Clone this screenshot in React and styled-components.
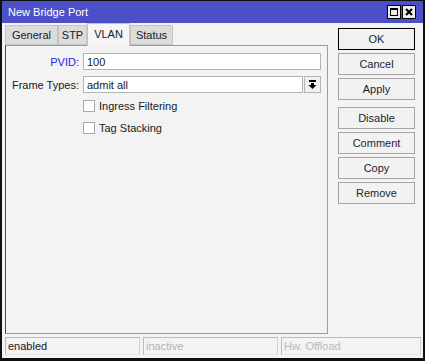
import React from 'react';
import styled, { createGlobalStyle } from 'styled-components';

const Global = createGlobalStyle`
  html, body { margin: 0; padding: 0; background: #fff; }
  body { font-family: "Liberation Sans", Arial, sans-serif; font-size: 11px; color: #202020; }
`;

const Window = styled.div`
  box-sizing: border-box;
  width: 425px;
  height: 361px;
  background: #f3f3f3;
  border-style: solid;
  border-color: #101010;
  border-width: 1px 2px 3px 2px;
  display: flex;
  flex-direction: column;
`;

const TitleBar = styled.div`
  height: 22px;
  background: #4c50c8;
  color: #fff;
  display: flex;
  align-items: center;
  padding: 0 7px 0 6px;
`;

const Title = styled.div`
  flex: 1;
  font-size: 11px;
`;

const TitleButton = styled.div`
  box-sizing: border-box;
  width: 14px;
  height: 14px;
  margin-left: 1px;
  background: #ececec;
  border: 1px solid #000;
  display: flex;
  align-items: center;
  justify-content: center;
`;

const Body = styled.div`
  display: flex;
  padding-left: 3px;
`;

const LeftCol = styled.div`
  display: flex;
  flex-direction: column;
`;

const Tabs = styled.div`
  display: flex;
  align-items: flex-end;
  height: 22px;
`;

const Tab = styled.div`
  box-sizing: border-box;
  width: ${p => p.$w}px;
  height: ${p => (p.$active ? 23 : 20)}px;
  margin-bottom: ${p => (p.$active ? -1 : 0)}px;
  background: ${p => (p.$active ? '#f6f6f6' : '#dcdcdc')};
  border: 1px solid #c4c4c4;
  border-bottom: ${p => (p.$active ? 'none' : '1px solid #c4c4c4')};
  display: flex;
  align-items: center;
  justify-content: center;
  padding-bottom: ${p => (p.$active ? 3 : 0)}px;
  position: relative;
  z-index: ${p => (p.$active ? 1 : 0)};
`;

const Panel = styled.div`
  box-sizing: border-box;
  width: 323px;
  height: 289px;
  border: 1px solid #9c9c9c;
  border-left-color: #4a4a4a;
  padding: 7px 6px 0 0;
  display: grid;
  grid-template-columns: 73px 1fr;
  column-gap: 4px;
  row-gap: 6px;
  align-content: start;
`;

const Label = styled.div`
  text-align: right;
  align-self: center;
  color: ${p => (p.$blue ? '#2222ee' : '#202020')};
`;

const Field = styled.div`
  display: flex;
  gap: 1px;
  height: 17px;
`;

const Input = styled.div`
  box-sizing: border-box;
  flex: 1;
  height: 17px;
  background: #fff;
  border: 1px solid #b4b4b4;
  padding-left: 3px;
  display: flex;
  align-items: center;
`;

const DropButton = styled.div`
  box-sizing: border-box;
  width: 17px;
  height: 17px;
  background: #f0f0f0;
  border: 1px solid #b4b4b4;
  display: flex;
  align-items: center;
  justify-content: center;
`;

const CheckRow = styled.div`
  grid-column: 2;
  display: flex;
  align-items: center;
  gap: 4px;
  height: 16px;
  margin-top: ${p => p.$top || 0}px;
`;

const Box = styled.div`
  box-sizing: border-box;
  width: 12px;
  height: 12px;
  background: #fff;
  border: 1px solid #a8a8a8;
`;

const RightCol = styled.div`
  display: flex;
  flex-direction: column;
  padding-top: 5px;
  margin-left: 10px;
`;

const Button = styled.div`
  box-sizing: border-box;
  width: 77px;
  height: 22px;
  margin-bottom: ${p => p.$gap || 3}px;
  background: #f2f2f2;
  border: 1px solid ${p => (p.$default ? '#000' : '#a4a4a4')};
  display: flex;
  align-items: center;
  justify-content: center;
  color: #1e1e30;
  font-size: 11px;
`;

const StatusBar = styled.div`
  display: flex;
  gap: 3px;
  padding: 0 2px 0 3px;
  margin-top: 3px;
`;

const StatusField = styled.div`
  box-sizing: border-box;
  width: ${p => p.$w}px;
  height: 18px;
  border: 1px solid #bcbcbc;
  border-bottom-color: #e6e6e6;
  border-right-color: #d0d0d0;
  padding-left: 2px;
  display: flex;
  align-items: center;
  color: ${p => p.$color || '#202020'};
`;

const MaxIcon = () => (
  <svg width="8" height="8" viewBox="0 0 8 8">
    <rect x="0.5" y="0.5" width="7" height="7" fill="none" stroke="#000" />
    <rect x="0" y="0" width="8" height="2" fill="#000" />
  </svg>
);

const CloseIcon = () => (
  <svg width="8" height="8" viewBox="0 0 8 8">
    <path d="M1 1L7 7M7 1L1 7" stroke="#000" strokeWidth="2" />
  </svg>
);

const DropIcon = () => (
  <svg width="9" height="9" viewBox="0 0 9 9">
    <rect x="1" y="0" width="7" height="2" fill="#000" />
    <rect x="3" y="3" width="3" height="2" fill="#000" />
    <path d="M0.5 5H8.5L4.5 9Z" fill="#000" />
  </svg>
);

const tabs = [
  { name: 'General', w: 53 },
  { name: 'STP', w: 29 },
  { name: 'VLAN', w: 43, active: true },
  { name: 'Status', w: 43 },
];

const buttons = [
  { name: 'OK', def: true },
  { name: 'Cancel' },
  { name: 'Apply', gap: 7 },
  { name: 'Disable' },
  { name: 'Comment' },
  { name: 'Copy' },
  { name: 'Remove' },
];

export default function App() {
  return (
    <>
      <Global />
      <Window>
        <TitleBar>
          <Title>New Bridge Port</Title>
          <TitleButton><MaxIcon /></TitleButton>
          <TitleButton><CloseIcon /></TitleButton>
        </TitleBar>
        <Body>
          <LeftCol>
            <Tabs>
              {tabs.map(t => (
                <Tab key={t.name} $w={t.w} $active={t.active}>{t.name}</Tab>
              ))}
            </Tabs>
            <Panel>
              <Label $blue>PVID:</Label>
              <Field><Input>100</Input></Field>
              <Label>Frame Types:</Label>
              <Field>
                <Input>admit all</Input>
                <DropButton><DropIcon /></DropButton>
              </Field>
              <CheckRow $top={-1}><Box />Ingress Filtering</CheckRow>
              <CheckRow><Box />Tag Stacking</CheckRow>
            </Panel>
          </LeftCol>
          <RightCol>
            {buttons.map(b => (
              <Button key={b.name} $default={b.def} $gap={b.gap}>{b.name}</Button>
            ))}
          </RightCol>
        </Body>
        <StatusBar>
          <StatusField $w={135}>enabled</StatusField>
          <StatusField $w={135} $color="#b4b4b4">inactive</StatusField>
          <StatusField $w={140} $color="#b4bcc4">Hw. Offload</StatusField>
        </StatusBar>
      </Window>
    </>
  );
}
